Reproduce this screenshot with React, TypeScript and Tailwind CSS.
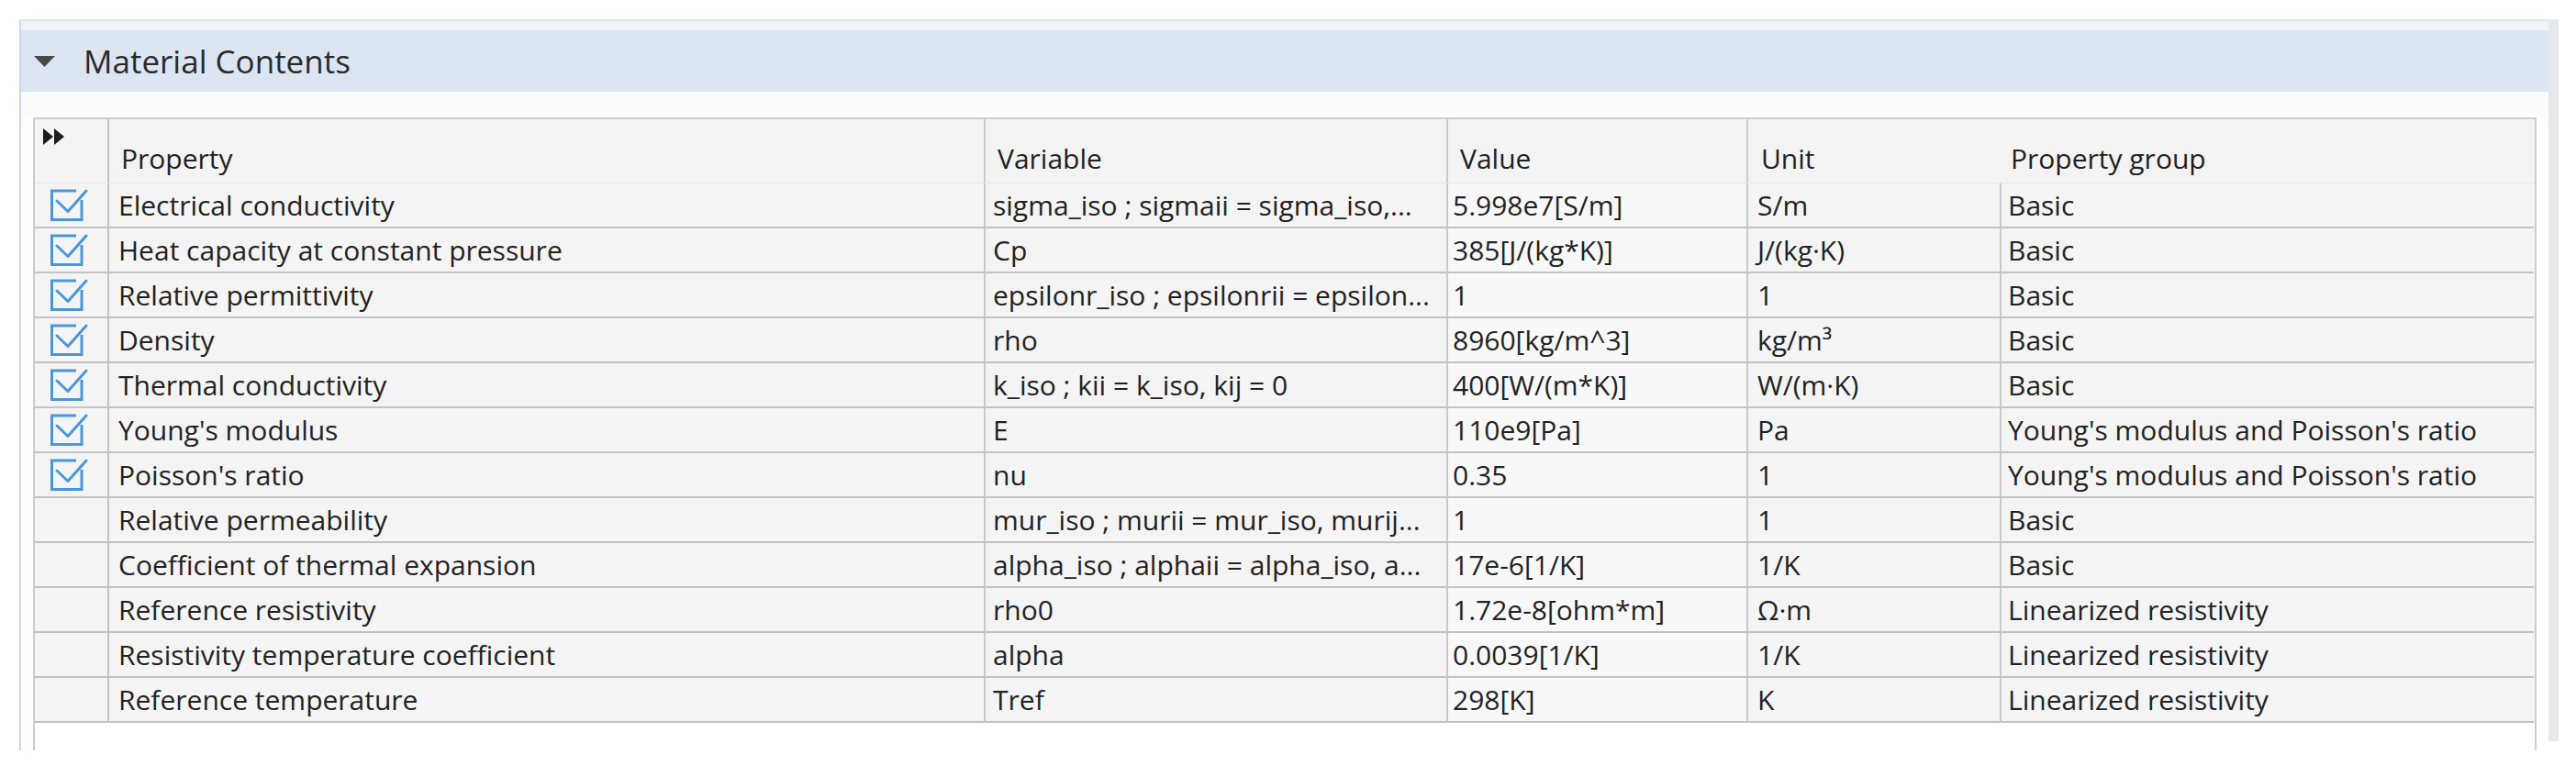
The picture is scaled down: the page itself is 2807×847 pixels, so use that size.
import React from "react";

type Row = {
  checked: boolean;
  property: string;
  variable: string;
  value: string;
  unit: string;
  group: string;
};

const rows: Row[] = [
  { checked: true, property: "Electrical conductivity", variable: "sigma_iso ; sigmaii = sigma_iso,...", value: "5.998e7[S/m]", unit: "S/m", group: "Basic" },
  { checked: true, property: "Heat capacity at constant pressure", variable: "Cp", value: "385[J/(kg*K)]", unit: "J/(kg·K)", group: "Basic" },
  { checked: true, property: "Relative permittivity", variable: "epsilonr_iso ; epsilonrii = epsilon...", value: "1", unit: "1", group: "Basic" },
  { checked: true, property: "Density", variable: "rho", value: "8960[kg/m^3]", unit: "kg/m³", group: "Basic" },
  { checked: true, property: "Thermal conductivity", variable: "k_iso ; kii = k_iso, kij = 0", value: "400[W/(m*K)]", unit: "W/(m·K)", group: "Basic" },
  { checked: true, property: "Young's modulus", variable: "E", value: "110e9[Pa]", unit: "Pa", group: "Young's modulus and Poisson's ratio" },
  { checked: true, property: "Poisson's ratio", variable: "nu", value: "0.35", unit: "1", group: "Young's modulus and Poisson's ratio" },
  { checked: false, property: "Relative permeability", variable: "mur_iso ; murii = mur_iso, murij...", value: "1", unit: "1", group: "Basic" },
  { checked: false, property: "Coefficient of thermal expansion", variable: "alpha_iso ; alphaii = alpha_iso, a...", value: "17e-6[1/K]", unit: "1/K", group: "Basic" },
  { checked: false, property: "Reference resistivity", variable: "rho0", value: "1.72e-8[ohm*m]", unit: "Ω·m", group: "Linearized resistivity" },
  { checked: false, property: "Resistivity temperature coefficient", variable: "alpha", value: "0.0039[1/K]", unit: "1/K", group: "Linearized resistivity" },
  { checked: false, property: "Reference temperature", variable: "Tref", value: "298[K]", unit: "K", group: "Linearized resistivity" },
];

function CheckIcon() {
  return (
    <svg width="42" height="37" viewBox="0 0 42 37" fill="none">
      <path d="M29 3H2.5V34.5H35V13" stroke="#4a96da" strokeWidth="3" strokeLinejoin="miter" />
      <path d="M8 14L20 25.5L40 3" stroke="#4a96da" strokeWidth="3" strokeLinecap="round" strokeLinejoin="round" />
    </svg>
  );
}

function ExpandIcon() {
  return (
    <svg width="24" height="18" viewBox="0 0 24 18">
      <polygon points="0,0 11,9 0,18" fill="#1c1c1c" />
      <polygon points="12,0 23,9 12,18" fill="#1c1c1c" />
    </svg>
  );
}

function CollapseIcon() {
  return (
    <svg width="23" height="12" viewBox="0 0 23 12">
      <polygon points="0,0 23,0 11.5,12" fill="#4a4a4a" />
    </svg>
  );
}

const cell = "h-[49px] flex items-center border-b-2 border-b-[#c3c3c3] whitespace-nowrap overflow-hidden";

export default function App() {
  return (
    <div
      className="w-[2807px] h-[847px] bg-white pt-[21px] pl-[21px] text-[#222222]"
      style={{ fontFamily: '"Segoe UI", "Open Sans", "Noto Sans", sans-serif' }}
    >
      <div className="flex w-[2767px]">
        <div className="flex-1 flex flex-col border-l-2 border-l-[#cbd7e6] border-t-2 border-t-[#dfe7f1]">
          <div className="h-[10px] bg-[#eef3f9]" />
          <div className="h-[67px] bg-[#dce6f2] flex items-center pl-[14px]">
            <CollapseIcon />
            <span className="ml-[31px] text-[35px] leading-[40px] text-[#2a2a2a]">Material Contents</span>
          </div>
          <div className="h-[28px] bg-[#fbfcfd]" />
          <div className="mx-[13px] h-[690px] border-l-2 border-r-2 border-t-2 border-[#cccccc] bg-white flex flex-col">
            <div className="grid grid-cols-[81px_955px_504px_327px_276px_580px] bg-[#f3f3f3] border-b border-b-[#e4e4e4] text-[30px] leading-[36px]">
              <div className="h-[69px] border-r-2 border-r-[#c2c2c2] pl-[9px] pt-[10px]">
                <ExpandIcon />
              </div>
              <div className="h-[69px] border-r-2 border-r-[#c8c8c8] flex items-end pb-[8px] pl-[13px]">Property</div>
              <div className="h-[69px] border-r-2 border-r-[#c8c8c8] flex items-end pb-[8px] pl-[13px]">Variable</div>
              <div className="h-[69px] border-r-2 border-r-[#c8c8c8] flex items-end pb-[8px] pl-[13px]">Value</div>
              <div className="h-[69px] flex items-end pb-[8px] pl-[14px]">Unit</div>
              <div className="h-[69px] flex items-end pb-[8px] pl-[10px]">Property group</div>
            </div>
            {rows.map((r, i) => (
              <div
                key={i}
                className="grid grid-cols-[81px_955px_504px_327px_276px_580px] bg-[#f4f4f4] text-[30px] leading-[36px]"
              >
                <div className={`${cell} border-r-2 border-r-[#c2c2c2] pl-[16px]`}>
                  {r.checked ? <CheckIcon /> : null}
                </div>
                <div className={`${cell} border-r-2 border-r-[#c8c8c8] pl-[10px]`}>{r.property}</div>
                <div className={`${cell} border-r-2 border-r-[#c8c8c8] pl-[8px]`}>{r.variable}</div>
                <div className={`${cell} border-r-2 border-r-[#c8c8c8] pl-[5px] bg-[#f8f8f8]`}>{r.value}</div>
                <div className={`${cell} border-r-2 border-r-[#c8c8c8] pl-[10px]`}>{r.unit}</div>
                <div className={`${cell} pl-[7px]`}>{r.group}</div>
              </div>
            ))}
            <div className="flex-1 bg-white" />
          </div>
        </div>
        <div className="w-[11px] h-[787px] bg-[#e5e7ea]" />
      </div>
    </div>
  );
}
